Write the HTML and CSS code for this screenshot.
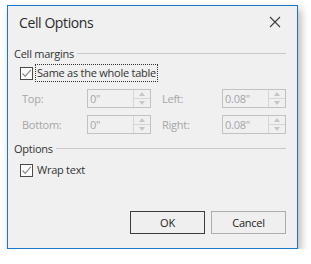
FILE: index.html
```html
<!DOCTYPE html>
<html>
<head>
<meta charset="utf-8">
<link rel="stylesheet" href="styles.css">
</head>
<body>
<div class="dialog">
  <div class="titlebar">
    <span class="title">Cell Options</span>
    <svg class="close" width="12" height="12" viewBox="0 0 12 12"><path d="M1 1L11 11M11 1L1 11" stroke="#3c3c3c" stroke-width="1.1" fill="none"/></svg>
  </div>
  <div class="content">
    <div class="group-head"><span>Cell margins</span><span class="rule"></span></div>
    <label class="check-row">
      <span class="box"><svg width="11" height="11" viewBox="0 0 11 11"><path d="M1.5 5.5L4.2 8.3L9.8 1.8" stroke="#8a8a8a" stroke-width="1.2" fill="none"/></svg></span>
      <span class="check-label focus">Same as the whole table</span>
    </label>
    <div class="grid">
      <span class="lbl">Top:</span>
      <div class="spin"><span class="val">0"</span><span class="btns"><span class="up"></span><span class="down"></span></span></div>
      <span class="lbl">Left:</span>
      <div class="spin"><span class="val">0.08"</span><span class="btns"><span class="up"></span><span class="down"></span></span></div>
      <span class="lbl">Bottom:</span>
      <div class="spin"><span class="val">0"</span><span class="btns"><span class="up"></span><span class="down"></span></span></div>
      <span class="lbl">Right:</span>
      <div class="spin"><span class="val">0.08"</span><span class="btns"><span class="up"></span><span class="down"></span></span></div>
    </div>
    <div class="group-head second"><span>Options</span><span class="rule"></span></div>
    <label class="check-row wrap">
      <span class="box"><svg width="11" height="11" viewBox="0 0 11 11"><path d="M1.5 5.5L4.2 8.3L9.8 1.8" stroke="#8a8a8a" stroke-width="1.2" fill="none"/></svg></span>
      <span class="check-label">Wrap text</span>
    </label>
    <div class="buttons">
      <button class="btn default">OK</button>
      <button class="btn">Cancel</button>
    </div>
  </div>
</div>
</body>
</html>
```
FILE: styles.css
```css
html, body {
  margin: 0;
  padding: 0;
  background: #ffffff;
}
body {
  font-family: "Open Sans", "Noto Sans", sans-serif;
  font-size: 11px;
  letter-spacing: -0.25px;
  color: #333333;
}
.dialog {
  box-sizing: border-box;
  margin: 5px 0 0 7px;
  width: 291px;
  height: 244px;
  background: #f0f0f0;
  border: 1px solid #1a78c8;
  box-shadow: 3px 4px 8px rgba(0,0,0,0.28);
  display: flex;
  flex-direction: column;
}
.titlebar {
  height: 31px;
  display: flex;
  align-items: center;
  justify-content: space-between;
  padding: 0 16px 0 11px;
  margin-top: 1px;
}
.title {
  font-size: 14px;
  letter-spacing: -0.4px;
  color: #2b2b2b;
}
.close { display: block; margin-top: -2px; }
.content {
  padding: 7px 11px 0 6px;
  display: flex;
  flex-direction: column;
}
.group-head {
  display: flex;
  align-items: center;
  height: 16px;
  color: #333;
}
.group-head .rule {
  flex: 1;
  height: 1px;
  background: #c8c8c8;
  margin-left: 3px;
  margin-top: 1px;
}
.group-head.second { margin-top: 6px; }
.check-row {
  display: flex;
  align-items: center;
  height: 18px;
  margin-top: 3px;
  padding-left: 6px;
}
.box {
  box-sizing: border-box;
  width: 13px;
  height: 13px;
  border: 1px solid #4a4a4a;
  background: #ffffff;
  display: flex;
  align-items: center;
  justify-content: center;
}
.box svg { display: block; }
.check-label {
  margin-left: 2px;
  padding: 0 1px;
  line-height: 16px;
  border: 1px dotted transparent;
}
.check-label.focus { border-color: #333; }
.check-row.wrap { margin-top: 5px; }
.grid {
  display: grid;
  grid-template-columns: 65px 64px 71px 64px;
  row-gap: 7px;
  padding-left: 8px;
  margin-top: 7px;
  align-items: center;
}
.grid .lbl:nth-child(4n+3) { padding-left: 11px; }
.lbl { color: #a6a6a6; }
.spin {
  box-sizing: border-box;
  height: 19px;
  border: 1px solid #c2c2c2;
  display: flex;
  color: #a6a6a6;
}
.val {
  flex: 1;
  padding-left: 2px;
  line-height: 17px;
}
.btns {
  width: 16px;
  border-left: 1px solid #d6d6d6;
  display: flex;
  flex-direction: column;
}
.btns .up, .btns .down {
  flex: 1;
  display: flex;
  align-items: center;
  justify-content: center;
}
.btns .up { border-bottom: 1px solid #d6d6d6; }
.btns .up::before {
  content: "";
  border-left: 3.5px solid transparent;
  border-right: 3.5px solid transparent;
  border-bottom: 4px solid #c6c6c6;
}
.btns .down::before {
  content: "";
  border-left: 3.5px solid transparent;
  border-right: 3.5px solid transparent;
  border-top: 4px solid #c6c6c6;
}
.buttons {
  display: flex;
  justify-content: flex-end;
  gap: 6px;
  margin-top: 32px;
}
.btn {
  box-sizing: border-box;
  width: 75px;
  height: 23px;
  font-family: "Open Sans", "Noto Sans", sans-serif;
  font-size: 11px;
  letter-spacing: -0.25px;
  color: #222;
  background: #efefef;
  border: 1px solid #adadad;
  padding: 0;
}
.btn.default { border-color: #3c3c3c; }
```
